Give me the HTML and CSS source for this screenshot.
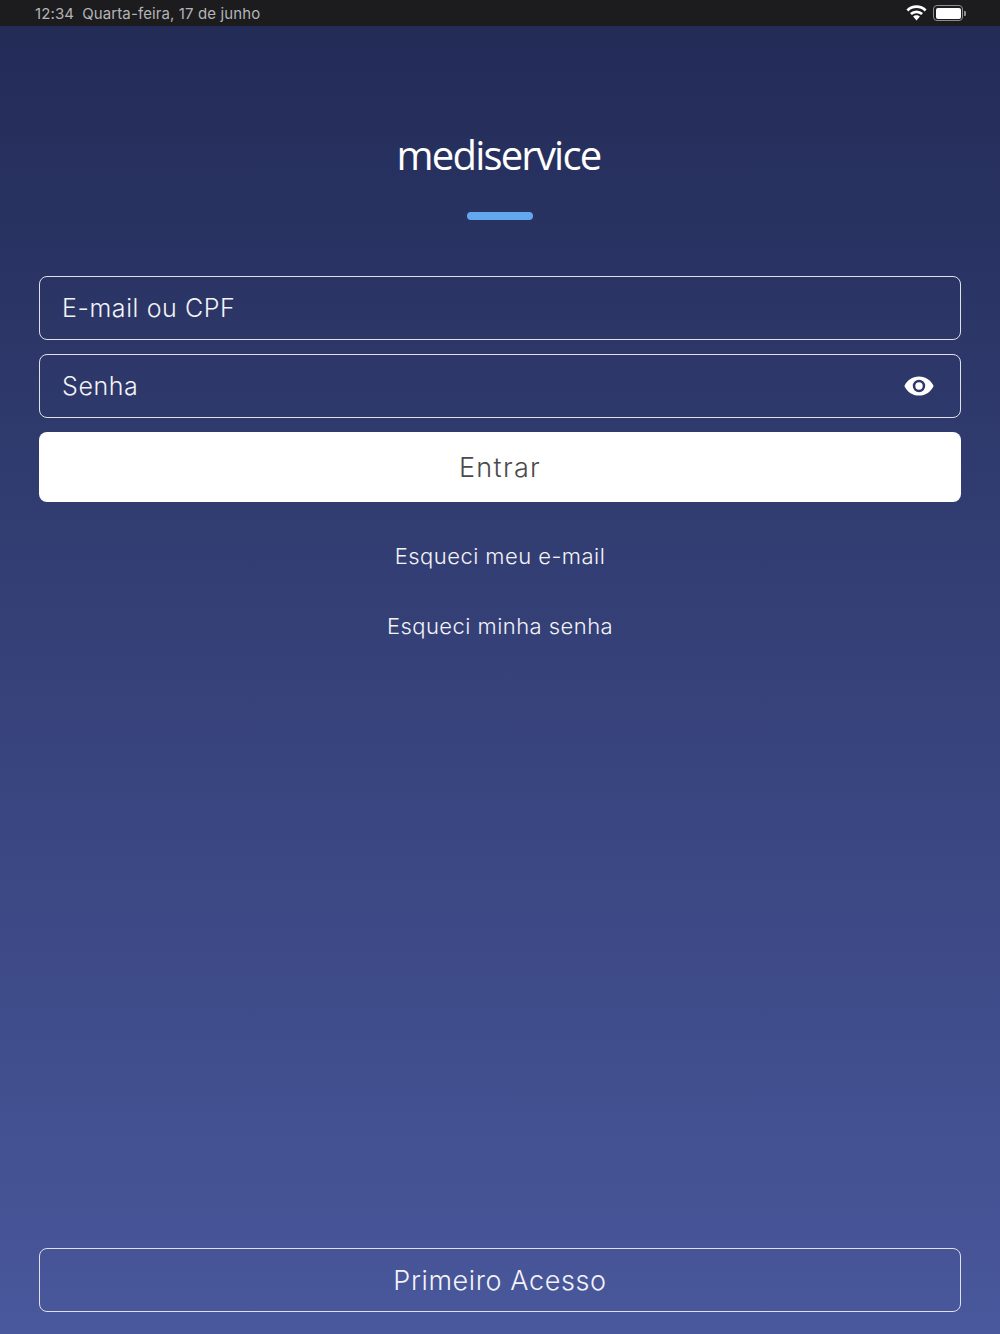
FILE: index.html
```html
<!DOCTYPE html>
<html lang="pt-BR">

<head>
    <meta charset="UTF-8">
    <meta name="viewport" content="width=device-width, initial-scale=1.0">
    <title>Mediservice</title>
    <link rel="stylesheet" href="styles.css">
</head>

<body>
    <div class="status-bar">
        <div class="status-time">
            <span>12:34</span>
            <span>Quarta-feira, 17 de junho</span>
        </div>
        <div class="status-icons">
            <svg class="wifi-icon" viewBox="0 0 21 16">
                <path fill="none" stroke="#fff" stroke-width="2.800" d="M1.400 5.400C3.800 3.100 7 1.700 10.500 1.700s6.700 1.400 9.100 3.700"/>
                <path fill="none" stroke="#fff" stroke-width="2.800" d="M4.900 9c1.500-1.400 3.400-2.200 5.600-2.200s4.100.8 5.600 2.200"/>
                <path fill="#fff" d="M10.500 10.200c-1.300 0-2.500.5-3.400 1.400l3.400 3.900 3.400-3.900c-.9-.9-2.100-1.400-3.400-1.400z"/>
            </svg>
            <div class="battery">
                <div class="battery-fill"></div>
            </div>
            <div class="battery-tip"></div>
        </div>
    </div>

    <div class="main-container">
        <div class="logo-block">
            <div class="logo">mediservice</div>
            <div class="logo-bar"></div>
        </div>

        <div class="field">E-mail ou CPF</div>
        <div class="field">
            <span>Senha</span>
            <svg class="eye-icon" viewBox="0 0 30 20">
                <path fill="#fff" fill-rule="evenodd" d="M15 .4C8.400.4 2.800 4.400.4 10c2.400 5.600 8 9.600 14.600 9.600S27.200 15.600 29.600 10C27.200 4.400 21.600.4 15 .4zm0 15.800a6.200 6.200 0 1 1 0-12.400 6.200 6.200 0 0 1 0 12.400zm0-9.900a3.700 3.700 0 1 0 0 7.400 3.700 3.700 0 0 0 0-7.400z"/>
            </svg>
        </div>
        <a href="#" class="login-button">Entrar</a>

        <div class="links">
            <a href="#" class="text-link">Esqueci meu e-mail</a>
            <a href="#" class="text-link">Esqueci minha senha</a>
        </div>

        <a href="#" class="outline-button">Primeiro Acesso</a>
    </div>
</body>

</html>
```

FILE: styles.css
```css
body {
    margin: 0;
    padding: 0;
    width: 1000px;
    height: 1334px;
    display: flex;
    flex-direction: column;
    overflow: hidden;
    background: #1c1c1e;
    font-family: Inter, "Noto Sans", sans-serif;
    font-weight: 350;
}

.status-bar {
    height: 26px;
    flex-shrink: 0;
    display: flex;
    justify-content: space-between;
    align-items: center;
    padding: 0 34px 0 35px;
    box-sizing: border-box;
    background: #1c1c1e;
    color: #b4b4b6;
    font-size: 15px;
    font-weight: 400;
    letter-spacing: 0.12px;
}

.status-time {
    display: flex;
    gap: 8px;
}

.status-icons {
    display: flex;
    align-items: center;
}

.wifi-icon {
    width: 21px;
    height: 16px;
    margin-right: 6px;
}

.battery {
    width: 30px;
    height: 16px;
    padding: 1.500px;
    box-sizing: border-box;
    border: 1px solid #8e8e90;
    border-radius: 4px;
}

.battery-fill {
    height: 100%;
    background: #fff;
    border-radius: 2px;
}

.battery-tip {
    width: 2px;
    height: 5px;
    margin-left: 1px;
    background: #8e8e90;
    border-radius: 0 1px 1px 0;
}

.main-container {
    flex: 1;
    display: flex;
    flex-direction: column;
    padding: 0 39px 22px;
    background: linear-gradient(#232c57, #49579c);
}

.logo-block {
    display: flex;
    flex-direction: column;
    align-items: center;
    padding-top: 100px;
    height: 250px;
    box-sizing: border-box;
}

.logo {
    font-family: "Open Sans", sans-serif;
    font-size: 40px;
    font-weight: 400;
    line-height: 58px;
    letter-spacing: -1.800px;
    margin-left: -3px;
    color: #fff;
}

.logo-bar {
    width: 66px;
    height: 8px;
    margin-top: 28px;
    border-radius: 4px;
    background: #63a8ee;
}

.field {
    height: 64px;
    margin-bottom: 14px;
    padding: 0 26px 0 22px;
    box-sizing: border-box;
    display: flex;
    justify-content: space-between;
    align-items: center;
    border: 1px solid #dfe1ea;
    border-radius: 8px;
    color: #f2f3f7;
    font-size: 25px;
    letter-spacing: 0.6px;
}

.eye-icon {
    width: 30px;
    height: 20px;
}

.login-button {
    height: 70px;
    display: flex;
    justify-content: center;
    align-items: center;
    border-radius: 8px;
    background: #fff;
    color: #4a4a4a;
    font-size: 27px;
    letter-spacing: 1.300px;
    text-decoration: none;
}

.links {
    display: flex;
    flex-direction: column;
    margin-top: 20px;
}

.text-link {
    height: 70px;
    padding-bottom: 2px;
    box-sizing: border-box;
    display: flex;
    justify-content: center;
    align-items: center;
    color: #f2f3f7;
    font-size: 22px;
    letter-spacing: 0.45px;
    text-decoration: none;
}

.outline-button {
    height: 64px;
    margin-top: auto;
    box-sizing: border-box;
    display: flex;
    justify-content: center;
    align-items: center;
    border: 1px solid #dfe1ea;
    border-radius: 8px;
    color: #f2f3f7;
    font-size: 27px;
    letter-spacing: 0.6px;
    text-decoration: none;
}
```
